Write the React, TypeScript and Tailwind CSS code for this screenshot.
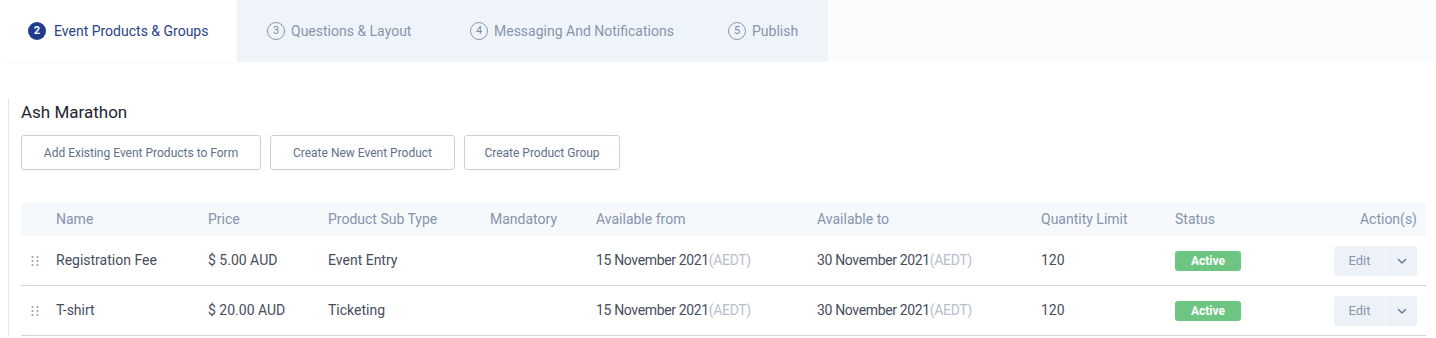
import React from "react";

const font = { fontFamily: "Roboto, 'Liberation Sans', sans-serif" };

const tabs = [
  { n: 2, label: "Event Products & Groups", active: true, w: "w-[237px]" },
  { n: 3, label: "Questions & Layout", active: false, w: "w-[203px]" },
  { n: 4, label: "Messaging And Notifications", active: false, w: "w-[258px]" },
  { n: 5, label: "Publish", active: false, w: "w-[130px]" },
];

const actions = [
  { label: "Add Existing Event Products to Form", w: "w-[240px]" },
  { label: "Create New Event Product", w: "w-[185px]" },
  { label: "Create Product Group", w: "w-[156px]" },
];

const products = [
  { name: "Registration Fee", price: "$ 5.00 AUD", sub: "Event Entry" },
  { name: "T-shirt", price: "$ 20.00 AUD", sub: "Ticketing" },
];

const cols =
  "grid grid-cols-[35px_152px_120px_162px_106px_221px_224px_134px_125px_1fr] items-center";

function DragHandle() {
  return (
    <svg width="8" height="12" viewBox="0 0 8 12" className="ml-[10px]">
      {[1.5, 6.5].map((x) =>
        [2, 6, 10].map((y) => (
          <circle key={`${x}-${y}`} cx={x} cy={y} r="1.1" fill="#97a2b4" />
        ))
      )}
    </svg>
  );
}

function ChevronDown() {
  return (
    <svg width="12" height="12" viewBox="0 0 24 24" fill="none" stroke="#6b7d99" strokeWidth="3" strokeLinecap="round" strokeLinejoin="round">
      <path d="M5 9l7 7 7-7" />
    </svg>
  );
}

export default function App() {
  return (
    <div className="w-[1436px] h-[338px] bg-white overflow-hidden" style={font}>
      {/* step tabs */}
      <div className="h-[62px] flex bg-[#fbfcfd]">
        {tabs.map((t) =>
          t.active ? (
            <div
              key={t.n}
              className={`${t.w} h-full bg-white flex items-center pl-[28px] gap-[8px] shadow-[0_0_4px_rgba(0,0,0,0.04)]`}
            >
              <span className="w-[18px] h-[18px] rounded-full bg-[#1f3d8c] text-white text-[11px] font-bold flex items-center justify-center">
                {t.n}
              </span>
              <span className="text-[14px] text-[#2a4287]">{t.label}</span>
            </div>
          ) : (
            <div
              key={t.n}
              className={`${t.w} h-full bg-[#eff4fa] flex items-center pl-[30px] gap-[6px]`}
            >
              <span className="w-[18px] h-[18px] rounded-full border border-[#8c98ad] text-[#7f8ba0] text-[11px] flex items-center justify-center">
                {t.n}
              </span>
              <span className="text-[14px] text-[#8894ab] whitespace-nowrap">{t.label}</span>
            </div>
          )
        )}
      </div>

      {/* content */}
      <div className="mt-[36px] ml-[8px] border-l border-[#dfe3ea] pl-[12px] pr-[10px] pt-[2px]">
        <h1 className="text-[17px] leading-[24px] text-[#1f2430]">Ash Marathon</h1>
        <div className="flex gap-[9px] mt-[11px]">
          {actions.map((b) => (
            <button
              key={b.label}
              className={`${b.w} h-[35px] border border-[#c9d0db] rounded-[3px] text-[12px] text-[#61708a] bg-white`}
            >
              {b.label}
            </button>
          ))}
        </div>

        <div className="mt-[33px]">
          <div className={`${cols} h-[33px] bg-[#f6f9fc] text-[14px] text-[#8593ab]`}>
            <span />
            <span>Name</span>
            <span>Price</span>
            <span>Product Sub Type</span>
            <span>Mandatory</span>
            <span>Available from</span>
            <span>Available to</span>
            <span>Quantity Limit</span>
            <span>Status</span>
            <span className="text-right pr-[9px]">Action(s)</span>
          </div>
          {products.map((p) => (
            <div
              key={p.name}
              className={`${cols} h-[50px] border-b border-[#cfd6e2] text-[14px] text-[#464d5c]`}
            >
              <DragHandle />
              <span>{p.name}</span>
              <span>{p.price}</span>
              <span>{p.sub}</span>
              <span />
              <span className="tracking-[-0.35px]">
                15 November 2021<span className="text-[#b7bfcc]">(AEDT)</span>
              </span>
              <span className="tracking-[-0.35px]">
                30 November 2021<span className="text-[#b7bfcc]">(AEDT)</span>
              </span>
              <span>120</span>
              <span>
                <span className="inline-flex w-[66px] h-[20px] items-center justify-center rounded-[3px] bg-[#6cc682] text-white text-[12px] font-bold">
                  Active
                </span>
              </span>
              <div className="flex justify-end pr-[9px]">
                <div className="flex h-[30px] rounded-[3px] overflow-hidden bg-[#edf2f8]">
                  <span className="w-[52px] flex items-center justify-center text-[13px] text-[#8795ac] border-r border-[#f7f9fc]">
                    Edit
                  </span>
                  <span className="w-[31px] flex items-center justify-center">
                    <ChevronDown />
                  </span>
                </div>
              </div>
            </div>
          ))}
        </div>
      </div>
    </div>
  );
}
